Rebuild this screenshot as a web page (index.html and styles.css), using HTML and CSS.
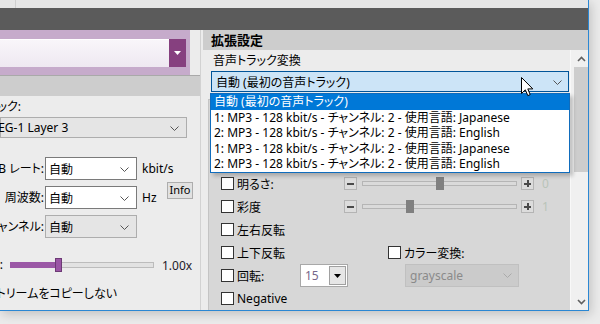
FILE: index.html
```html
<!DOCTYPE html>
<html lang="ja">
<head>
    <meta charset="UTF-8">
    <meta name="viewport" content="width=device-width, initial-scale=1.0">
    <title>拡張設定</title>
    <link rel="stylesheet" href="styles.css">
</head>
<body>
<div class="desktop">
    <div class="window">
        <div class="top-strip"><span class="tick"></span></div>
        <div class="title-bar"></div>

        <div class="window-body">
            <!-- panel izquierdo (recortado) -->
            <div class="left-pane">
                <div class="search-band">
                    <div class="search-input"></div>
                    <div class="search-button">
                        <svg width="7" height="4" viewBox="0 0 7 4"><path d="M0 0H7L3.5 4Z" fill="#fff"/></svg>
                    </div>
                </div>
                <div class="tab-band"></div>

                <div class="left-content">
                    <div class="cut-label codec-label"><span>コーデック:</span></div>
                    <div class="select select-wide">
                        <span class="select-text codec-text">MPEG-1 Layer 3</span>
                        <svg class="chevron" width="9" height="5" viewBox="0 0 9 5"><path d="M0.5 0.5L4.5 4.5L8.5 0.5" fill="none" stroke="#555"/></svg>
                    </div>

                    <div class="audio-grid">
                        <div class="cut-label grid-label"><span>B レート:</span></div>
                        <div class="select select-small">
                            <span class="select-text">自動</span>
                            <svg class="chevron" width="9" height="5" viewBox="0 0 9 5"><path d="M0.5 0.5L4.5 4.5L8.5 0.5" fill="none" stroke="#555"/></svg>
                        </div>
                        <div class="unit">kbit/s</div>
                        <div class="info-cell"><button class="info-button">Info</button></div>

                        <div class="cut-label grid-label"><span>周波数:</span></div>
                        <div class="select select-small">
                            <span class="select-text">自動</span>
                            <svg class="chevron" width="9" height="5" viewBox="0 0 9 5"><path d="M0.5 0.5L4.5 4.5L8.5 0.5" fill="none" stroke="#555"/></svg>
                        </div>
                        <div class="unit">Hz</div>

                        <div class="cut-label grid-label"><span>チャンネル:</span></div>
                        <div class="select select-small select-gray">
                            <span class="select-text">自動</span>
                            <svg class="chevron" width="9" height="5" viewBox="0 0 9 5"><path d="M0.5 0.5L4.5 4.5L8.5 0.5" fill="none" stroke="#555"/></svg>
                        </div>
                        <div class="unit"></div>
                    </div>

                    <div class="speed-row">
                        <div class="cut-label speed-label"><span>速度:</span></div>
                        <div class="purple-track">
                            <div class="purple-fill" style="width: 48px"></div>
                            <div class="purple-thumb" style="left: 44px"></div>
                        </div>
                        <span class="speed-value">1.00x</span>
                    </div>

                    <div class="cut-label copy-label"><span>ストリームをコピーしない</span></div>
                </div>
            </div>

            <div class="divider"></div>

            <!-- panel derecho -->
            <div class="right-pane">
                <div class="section-header">拡張設定</div>
                <div class="right-body">
                    <div class="right-content">
                        <div class="field-title">音声トラック変換</div>
                        <div class="combo">
                            <span>自動 (最初の音声トラック)</span>
                            <svg class="chevron" width="9" height="5" viewBox="0 0 9 5"><path d="M0.5 0.5L4.5 4.5L8.5 0.5" fill="none" stroke="#555"/></svg>
                        </div>

                        <div class="group-box">
                            <div class="opt-row">
                                <label class="check-label col-123"><span class="box"></span>明るさ:</label>
                                <div class="slider">
                                    <span class="step-btn"><i class="bar"></i></span>
                                    <div class="gray-track"><div class="gray-thumb" style="left: 73px"></div></div>
                                    <span class="step-btn"><i class="bar"></i><i class="bar vertical"></i></span>
                                    <span class="slider-value">0</span>
                                </div>
                            </div>
                            <div class="opt-row">
                                <label class="check-label col-123"><span class="box"></span>彩度</label>
                                <div class="slider">
                                    <span class="step-btn"><i class="bar"></i></span>
                                    <div class="gray-track"><div class="gray-thumb" style="left: 43px"></div></div>
                                    <span class="step-btn"><i class="bar"></i><i class="bar vertical"></i></span>
                                    <span class="slider-value">1</span>
                                </div>
                            </div>
                            <div class="opt-row">
                                <label class="check-label"><span class="box"></span>左右反転</label>
                            </div>
                            <div class="opt-row">
                                <label class="check-label col-167"><span class="box"></span>上下反転</label>
                                <label class="check-label"><span class="box"></span>カラー変換:</label>
                            </div>
                            <div class="opt-row">
                                <label class="check-label col-79"><span class="box"></span>回転:</label>
                                <div class="spinner">
                                    <span class="spinner-text">15</span>
                                    <span class="spinner-btn">
                                        <svg width="7" height="4" viewBox="0 0 7 4"><path d="M0 0H7L3.5 4Z" fill="#000"/></svg>
                                    </span>
                                </div>
                                <div class="select-disabled">
                                    <span>grayscale</span>
                                    <svg class="chevron" width="9" height="5" viewBox="0 0 9 5"><path d="M0.5 0.5L4.5 4.5L8.5 0.5" fill="none" stroke="#aaa"/></svg>
                                </div>
                            </div>
                            <div class="opt-row">
                                <label class="check-label"><span class="box"></span>Negative</label>
                            </div>
                        </div>
                    </div>

                    <div class="scrollbar">
                        <div class="scroll-arrow">
                            <svg width="9" height="6" viewBox="0 0 9 6"><path d="M1 5L4.5 1.5L8 5" fill="none" stroke="#606060" stroke-width="1.6"/></svg>
                        </div>
                        <div class="scroll-thumb"></div>
                        <div class="scroll-space"></div>
                        <div class="scroll-arrow">
                            <svg width="9" height="6" viewBox="0 0 9 6"><path d="M1 1L4.5 4.5L8 1" fill="none" stroke="#606060" stroke-width="1.6"/></svg>
                        </div>
                    </div>
                </div>
            </div>
        </div>
    </div>

    <!-- lista desplegada -->
    <ul class="dropdown-list">
        <li class="selected">自動 (最初の音声トラック)</li>
        <li>1: MP3 - 128 kbit/s - チャンネル: 2 - 使用言語: Japanese</li>
        <li>2: MP3 - 128 kbit/s - チャンネル: 2 - 使用言語: English</li>
        <li>1: MP3 - 128 kbit/s - チャンネル: 2 - 使用言語: Japanese</li>
        <li>2: MP3 - 128 kbit/s - チャンネル: 2 - 使用言語: English</li>
    </ul>

    <svg class="cursor" width="13" height="20" viewBox="0 0 13 20">
        <path d="M0.5 0.5V16.5L4.3 12.8L6.8 18.6L9.2 17.6L6.8 11.9H11.8Z" fill="#fff" stroke="#000" stroke-linejoin="round"/>
    </svg>
</div>
</body>
</html>
```

FILE: styles.css
```css
* {
    box-sizing: border-box;
}

body {
    margin: 0;
    font-family: "Noto Sans", "Noto Sans CJK JP", sans-serif;
    font-size: 12px;
    font-feature-settings: "palt" 1;
    color: #000;
    background: #ebebeb;
}

.desktop {
    position: relative;
    width: 600px;
    height: 324px;
    overflow: hidden;
    background: #ebebeb;
}

.window {
    width: 589px;
    height: 311px;
    display: flex;
    flex-direction: column;
    background: #ececec;
    border-right: 1px solid #2b87d3;
    border-bottom: 1px solid #2b87d3;
    box-shadow: 2px 3px 10px rgba(0, 0, 0, 0.18);
}

.top-strip {
    flex: none;
    height: 8px;
    background: #e6e6e6;
}

.tick {
    display: block;
    width: 1px;
    height: 8px;
    margin-left: 15px;
    background: #cfcfcf;
}

.title-bar {
    flex: none;
    height: 22px;
    background: #5b5b5b;
}

.window-body {
    flex: 1;
    display: flex;
    min-height: 0;
}

/* ---- panel izquierdo ---- */

.left-pane {
    width: 200px;
    flex: none;
    display: flex;
    flex-direction: column;
    overflow: hidden;
    background: #ececec;
}

.search-band {
    flex: none;
    display: flex;
    width: 190px;
    height: 45px;
    padding-top: 9px;
    background: #c6abcb;
}

.search-input {
    width: 169px;
    height: 28px;
    background: linear-gradient(#f9f6fa, #eee8f1);
    border-top: 1px solid #fff;
}

.search-button {
    width: 17px;
    height: 28px;
    display: flex;
    align-items: center;
    justify-content: center;
    background: #86407f;
}

.tab-band {
    flex: none;
    height: 21px;
    background: #cdcdcd;
    border-top: 1px solid #a9a9a9;
}

.left-content {
    display: flex;
    flex-direction: column;
    padding-top: 3px;
}

.cut-label {
    display: flex;
    justify-content: flex-end;
    white-space: nowrap;
    line-height: 16px;
}

.codec-label {
    width: 21px;
}

.select {
    position: relative;
    display: flex;
    align-items: center;
    background: #fff;
    border: 1px solid #7a7a7a;
}

.select .chevron {
    position: absolute;
    right: 7px;
    top: 50%;
    margin-top: -2px;
}

.select-text {
    padding-left: 3px;
    white-space: nowrap;
}

.select-wide {
    width: 187px;
    height: 21px;
    margin-top: 2px;
    background: #e5e5e5;
    border-color: #adadad;
}

.codec-text {
    margin-left: -24px;
}

.audio-grid {
    display: grid;
    grid-template-columns: 45px 97px 25px 26px;
    grid-auto-rows: 23px;
    row-gap: 6px;
    margin-top: 19px;
}

.grid-label {
    width: 44px;
    align-items: center;
}

.select-small {
    width: 92px;
    height: 23px;
}

.select-gray {
    background: #e5e5e5;
    border-color: #adadad;
}

.unit {
    display: flex;
    align-items: center;
    white-space: nowrap;
}

.info-cell {
    grid-column: 4;
    grid-row: 1 / 3;
    padding-top: 24px;
}

.info-button {
    width: 26px;
    height: 17px;
    padding: 0;
    font: inherit;
    font-size: 11px;
    line-height: 14px;
    background: #e1e1e1;
    border: 1px solid #adadad;
}

.speed-row {
    display: flex;
    align-items: center;
    height: 16px;
    margin-top: 19px;
}

.speed-label {
    width: 3px;
    margin-right: 7px;
}

.purple-track {
    position: relative;
    width: 144px;
    height: 6px;
    background: #e2e2e2;
    border: 1px solid #bcbcbc;
}

.purple-fill {
    margin: -1px 0 0 -1px;
    height: 6px;
    background: #9b58a6;
}

.purple-thumb {
    position: absolute;
    top: -5px;
    width: 7px;
    height: 14px;
    background: #9a55a5;
    border: 1px solid #6d3a75;
}

.speed-value {
    margin-left: 8px;
    color: #231a2a;
}

.copy-label {
    width: 117px;
    margin-top: 13px;
}

/* ---- separador ---- */

.divider {
    width: 3px;
    flex: none;
    background: #ececec;
    border-left: 1px solid #d2d2d2;
}

/* ---- panel derecho ---- */

.right-pane {
    flex: 1;
    display: flex;
    flex-direction: column;
    min-width: 0;
}

.section-header {
    flex: none;
    height: 20px;
    line-height: 20px;
    padding-left: 8px;
    font-size: 13px;
    font-weight: bold;
    background: #cdcdcd;
}

.right-body {
    flex: 1;
    display: flex;
    min-height: 0;
}

.right-content {
    width: 367px;
    display: flex;
    flex-direction: column;
}

.field-title {
    height: 21px;
    line-height: 21px;
    padding-left: 10px;
}

.combo {
    position: relative;
    display: flex;
    align-items: center;
    width: 358px;
    height: 22px;
    margin-left: 8px;
    padding-left: 4px;
    background: #cce4f7;
    border: 1px solid #005499;
}

.combo .chevron {
    position: absolute;
    right: 6px;
    top: 8px;
}

.group-box {
    flex: 1;
    margin: 7px 0 0 5px;
    padding: 72px 0 0 12px;
    background: #d7d7d7;
    border-left: 1px solid #c4c4c4;
    border-top: 1px solid #c4c4c4;
}

.opt-row {
    display: flex;
    align-items: center;
    height: 23px;
}

.check-label {
    display: flex;
    align-items: center;
    white-space: nowrap;
}

.col-123 {
    width: 123px;
}

.col-167 {
    width: 167px;
}

.col-79 {
    width: 79px;
}

.box {
    width: 13px;
    height: 13px;
    margin-right: 3px;
    background: #fff;
    border: 1px solid #333;
}

.slider {
    display: flex;
    align-items: center;
}

.step-btn {
    position: relative;
    width: 13px;
    height: 13px;
    display: flex;
    align-items: center;
    justify-content: center;
    background: #dcdcdc;
    border: 1px solid #b4b4b4;
}

.bar {
    position: absolute;
    width: 7px;
    height: 2px;
    background: #4a4a4a;
}

.bar.vertical {
    width: 2px;
    height: 7px;
}

.gray-track {
    position: relative;
    width: 155px;
    height: 5px;
    margin: 0 4px 0 5px;
    background: #dadada;
    border: 1px solid #b5b5b5;
}

.gray-thumb {
    position: absolute;
    top: -5px;
    width: 8px;
    height: 13px;
    background: #808080;
}

.slider-value {
    margin-left: 8px;
    color: #b9c4b9;
}

.spinner {
    display: flex;
    align-items: center;
    justify-content: space-between;
    width: 48px;
    height: 23px;
    padding: 1px 1px 1px 4px;
    background: #fff;
    border: 1px solid #a8a8a8;
}

.spinner-text {
    color: #76678a;
}

.spinner-btn {
    width: 17px;
    height: 19px;
    display: flex;
    align-items: center;
    justify-content: center;
    background: #e6e6e6;
    border: 1px solid #a0a0a0;
}

.select-disabled {
    position: relative;
    display: flex;
    align-items: center;
    width: 114px;
    height: 23px;
    margin-left: 57px;
    padding-left: 4px;
    color: #8a8a8a;
    background: #cbcbcb;
    border: 1px solid #c0c0c0;
}

.select-disabled .chevron {
    position: absolute;
    right: 6px;
    top: 8px;
}

.scrollbar {
    width: 18px;
    display: flex;
    flex-direction: column;
    padding-left: 3px;
    background: #f0f0f0;
    border-left: 1px solid #f8f8f8;
}

.scroll-arrow {
    height: 17px;
    display: flex;
    align-items: center;
    justify-content: center;
}

.scroll-thumb {
    height: 105px;
    background: #cdcdcd;
}

.scroll-space {
    flex: 1;
}

/* ---- superposiciones ---- */

.dropdown-list {
    position: absolute;
    left: 210px;
    top: 93px;
    width: 360px;
    margin: 0;
    padding: 0;
    list-style: none;
    background: #fff;
    border: 1px solid #0f6cbd;
    box-shadow: 3px 3px 4px rgba(0, 0, 0, 0.22);
}

.dropdown-list li {
    height: 15.6px;
    line-height: 15.6px;
    padding-left: 3px;
    white-space: nowrap;
}

.dropdown-list .selected {
    color: #fff;
    background: #0078d7;
}

.cursor {
    position: absolute;
    left: 521px;
    top: 77px;
}
```
